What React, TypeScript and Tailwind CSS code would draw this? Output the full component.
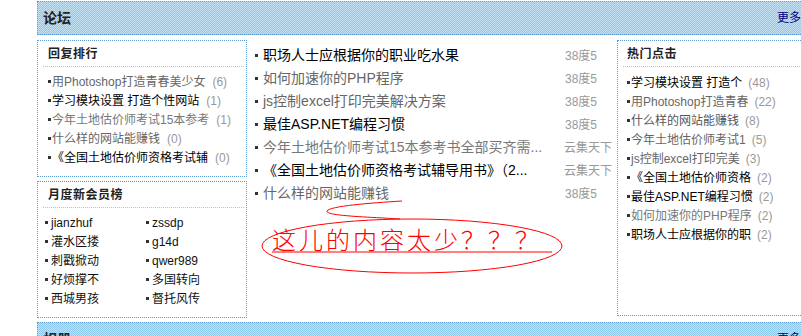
import React from 'react';

const font = 'font-["Liberation_Sans","Noto_Sans_CJK_SC",sans-serif]';

const replyRank = [
  { t: '用Photoshop打造青春美少女', n: 6, c: 'text-[#666]' },
  { t: '学习模块设置 打造个性网站', n: 1, c: 'text-black' },
  { t: '今年土地估价师考试15本参考', n: 1, c: 'text-[#777]' },
  { t: '什么样的网站能赚钱', n: 0, c: 'text-[#666]' },
  { t: '《全国土地估价师资格考试辅', n: 0, c: 'text-black' },
];

const members = [
  ['jianzhuf', 'zssdp'],
  ['灌水区搂', 'g14d'],
  ['刺戳掀动', 'qwer989'],
  ['好烦撑不', '多国转向'],
  ['西城男孩', '督托风传'],
];

const topics = [
  { t: '职场人士应根据你的职业吃水果', d: '38度5', c: 'text-black' },
  { t: '如何加速你的PHP程序', d: '38度5', c: 'text-[#666]' },
  { t: 'js控制excel打印完美解决方案', d: '38度5', c: 'text-[#666]' },
  { t: '最佳ASP.NET编程习惯', d: '38度5', c: 'text-black' },
  { t: '今年土地估价师考试15本参考书全部买齐需...', d: '云集天下', c: 'text-[#777]' },
  { t: '《全国土地估价师资格考试辅导用书》（2...', d: '云集天下', c: 'text-black' },
  { t: '什么样的网站能赚钱', d: '38度5', c: 'text-[#666]' },
];

const hot = [
  { t: '学习模块设置 打造个', n: 48, c: 'text-black' },
  { t: '用Photoshop打造青春', n: 22, c: 'text-[#666]' },
  { t: '什么样的网站能赚钱', n: 8, c: 'text-[#555]' },
  { t: '今年土地估价师考试1', n: 5, c: 'text-[#666]' },
  { t: 'js控制excel打印完美', n: 3, c: 'text-[#666]' },
  { t: '《全国土地估价师资格', n: 2, c: 'text-black' },
  { t: '最佳ASP.NET编程习惯', n: 2, c: 'text-black' },
  { t: '如何加速你的PHP程序', n: 2, c: 'text-[#777]' },
  { t: '职场人士应根据你的职', n: 2, c: 'text-black' },
];

const Dot = ({ className = '' }: { className?: string }) => (
  <span className={`inline-block w-[3px] h-[3px] bg-[#333] shrink-0 ${className}`} />
);

const Bar = ({ title }: { title: string }) => (
  <div className="h-[34px] flex items-center justify-between pl-[5px] pr-[9px] border border-dotted border-[#5b9bd5] bg-[image:repeating-conic-gradient(#8ec8ea_0_25%,#c4e1f4_0_50%)] bg-[length:2px_2px]">
    <span className="text-[14px] font-bold text-[#222]">{title}</span>
    <span className="text-[12px] text-[#000080]">更多</span>
  </div>
);

const BoxTitle = ({ title, sep }: { title: string; sep: string }) => (
  <>
    <div className="h-[25px] flex items-center text-[12px] font-bold text-[#222] tracking-[0.5px]">{title}</div>
    <div className={`border-b border-dotted border-[#8dd0f0] ${sep}`} />
  </>
);

export default function App() {
  return (
    <div className={`relative w-[801px] h-[336px] overflow-hidden bg-white ${font}`}>
      <div className="w-[774px] ml-[37px] pt-[1px]">
        <Bar title="论坛" />

        <div className="flex mt-[5px] h-[278px]">
          {/* left column */}
          <div className="w-[210px] flex flex-col gap-[4px] shrink-0">
            <div className="h-[137px] border border-dotted border-[#5b9bd5] px-[10px]">
              <BoxTitle title="回复排行" sep="-ml-[5px] -mr-[8px]" />
              <ul className="pt-[5px] text-[12px]">
                {replyRank.map((r, i) => (
                  <li key={i} className="h-[19px] flex items-center whitespace-nowrap">
                    <Dot className="mr-[1px]" />
                    <span className={r.c}>{r.t}</span>
                    <span className="text-[#999] ml-[7px]">({r.n})</span>
                  </li>
                ))}
              </ul>
            </div>
            <div className="h-[137px] border border-dotted border-[#5b9bd5] pl-[10px] pr-[2px]">
              <BoxTitle title="月度新会员榜" sep="-ml-[5px]" />
              <ul className="pt-[5px] -ml-[3px] grid grid-cols-[101px_1fr] text-[12px] text-[#111]">
                {members.flat().map((m, i) => (
                  <li key={i} className="h-[19px] flex items-center">
                    <Dot className="mr-[3px]" />
                    <span>{m}</span>
                  </li>
                ))}
              </ul>
            </div>
          </div>

          {/* center list */}
          <ul className="w-[358px] ml-[7px] pt-[4px] shrink-0">
            {topics.map((r, i) => (
              <li key={i} className="h-[23px] flex items-center whitespace-nowrap">
                <Dot className="ml-[1px] mr-[5px]" />
                <span className={`w-[302px] text-[14px] ${r.c}`}>{r.t}</span>
                <span className="text-[12px] text-[#999]">{r.d}</span>
              </li>
            ))}
          </ul>

          {/* right box */}
          <div className="ml-[5px] w-[194px] h-[276px] border border-dotted border-[#5b9bd5] pl-[9px] shrink-0">
            <BoxTitle title="热门点击" sep="-ml-[4px]" />
            <ul className="pt-[6px] text-[12px]">
              {hot.map((r, i) => (
                <li key={i} className="h-[19px] flex items-center whitespace-nowrap">
                  <Dot className="mr-[1px]" />
                  <span className={r.c}>{r.t}</span>
                  <span className="text-[#999] ml-[6px]">({r.n})</span>
                </li>
              ))}
            </ul>
          </div>
        </div>

        <div className="mt-[4px]">
          <Bar title="相册" />
        </div>
      </div>

      {/* red annotation */}
      <svg className="absolute left-0 top-0 pointer-events-none" width="801" height="336" viewBox="0 0 801 336">
        <path d="M402 201 C 370 203, 330 206, 327 211 C 325 216, 370 217, 400 219" fill="none" stroke="#ff0000" strokeWidth="1" />
        <ellipse cx="412" cy="246" rx="150" ry="27" fill="none" stroke="#ff0000" strokeWidth="1" />
        <line x1="272" y1="252" x2="552" y2="252" stroke="#ff0000" strokeWidth="1" />
      </svg>
      <div className='absolute left-[272px] top-[227px] text-[24px] leading-none tracking-[3px] text-[#ff0000] whitespace-nowrap font-["Noto_Sans_CJK_SC",sans-serif] font-light pointer-events-none'>
        这儿的内容太少？？？
      </div>
    </div>
  );
}
